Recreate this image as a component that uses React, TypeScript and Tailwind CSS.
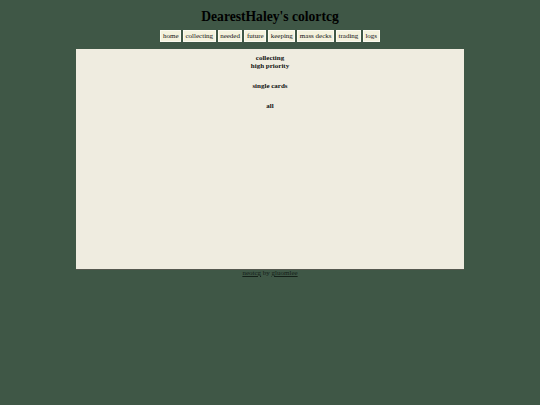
export default function App() {
  const links = ['home', 'collecting', 'needed', 'future', 'keeping', 'mass decks', 'trading', 'logs'];

  return (
    <div
      className="min-h-[405px] w-full bg-[#3f5746] text-black"
      style={{ fontFamily: '"Liberation Serif", "Times New Roman", serif' }}
    >
      <div className="pt-[8px] text-center text-[13.6px] font-bold leading-[17px]">
        DearestHaley's colortcg
      </div>

      <nav className="mt-[5px] flex justify-center gap-[2px]">
        {links.map((l) => (
          <a
            key={l}
            href="#"
            className="border border-[#fbfaf0] bg-[#f4f2dd] px-[1.5px] text-[7px] leading-[10px] text-[#111]"
          >
            {l}
          </a>
        ))}
      </nav>

      <main className="mx-auto mt-[7px] h-[221px] w-[388px] border-b border-[#55584f] bg-[#efece0] pt-[5px] text-center text-[7px] font-bold leading-[8px] text-[#111]">
        <div>collecting</div>
        <div>high priority</div>
        <div className="mt-[12px]">single cards</div>
        <div className="mt-[12px]">all</div>
      </main>

      <footer className="text-center text-[7px] leading-[7px] text-[#142018]">
        <a href="#" className="underline">neotcg</a> by <a href="#" className="underline">gluomlee</a>
      </footer>
    </div>
  );
}
